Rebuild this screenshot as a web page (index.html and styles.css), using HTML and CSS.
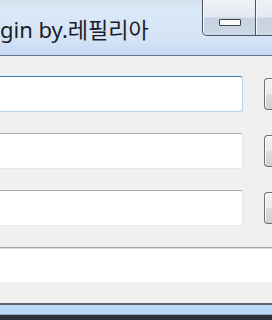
FILE: index.html
```html
<!DOCTYPE html>
<html>
<head>
  <meta charset="utf-8">
  <link rel="stylesheet" href="styles.css">
</head>
<body>
  <div class="window">
    <div class="titlebar">
      <div class="title">gin by.레필리아</div>
      <div class="caption-buttons">
        <div class="cap-btn min-btn"><span class="min-icon"></span></div>
        <div class="cap-btn max-btn"></div>
      </div>
    </div>

    <div class="client">
      <div class="form-row">
        <input type="text" class="textbox focused">
        <button class="side-btn"></button>
      </div>
      <div class="form-row">
        <input type="text" class="textbox">
        <button class="side-btn"></button>
      </div>
      <div class="form-row">
        <input type="text" class="textbox">
        <button class="side-btn"></button>
      </div>
    </div>

    <div class="log-area"></div>
    <div class="status-bar"></div>
  </div>

  <div class="next-window"></div>
</body>
</html>
```

FILE: styles.css
```css
html, body {
  margin: 0;
  padding: 0;
}

body {
  width: 272px;
  height: 320px;
  overflow: hidden;
  background-color: #2b323a;
  font-family: "Noto Sans", "Noto Sans CJK KR", sans-serif;
}

.window {
  display: flex;
  flex-direction: column;
}

/* title bar */
.titlebar {
  display: flex;
  height: 55px;
  border-bottom: 1px solid #67778a;
  background: linear-gradient(#d5e0ec, #dae8f8 20%, #d4e4f6 70%, #c5daf2);
}

.title {
  width: 202px;
  flex: none;
  padding-top: 15px;
  font-size: 22px;
  line-height: 28px;
  color: #1c1c2a;
  white-space: nowrap;
}

.caption-buttons {
  display: flex;
  flex: none;
  align-self: flex-start;
}

.cap-btn {
  box-sizing: border-box;
  height: 36px;
  border: 1px solid #4a5664;
  border-top: none;
  background: linear-gradient(#eef2f7, #e3eaf2 48%, #c6d2df 52%, #cbd7e4);
  box-shadow: inset 1px 0 0 #f6f9fc;
}

.min-btn {
  width: 54px;
  border-bottom-left-radius: 5px;
  display: flex;
  justify-content: center;
  align-items: flex-end;
}

.min-icon {
  width: 20px;
  height: 5px;
  margin-bottom: 9px;
  margin-left: 2px;
  border: 1px solid #3b4552;
  border-radius: 1px;
  background-color: #fbfbfb;
}

.max-btn {
  width: 16px;
  border-left: none;
  border-right: none;
}

/* client area with three rows */
.client {
  height: 171px;
  padding-top: 20px;
  background-color: #f0f0f0;
  display: flex;
  flex-direction: column;
  gap: 21px;
}

.form-row {
  display: flex;
  align-items: center;
  height: 36px;
}

.textbox {
  flex: none;
  box-sizing: border-box;
  width: 243px;
  height: 36px;
  margin: 0;
  padding: 0 4px;
  border: 1px solid #e2e7ec;
  border-top-color: #abadb3;
  border-left: none;
  border-radius: 0 3px 3px 0;
  background-color: #ffffff;
  font-family: "Noto Sans", sans-serif;
  font-size: 15px;
  outline: none;
}

.textbox.focused {
  border-color: #b7d3ea;
  border-top-color: #3d7bad;
}

.side-btn {
  flex: none;
  width: 8px;
  height: 32px;
  margin: 0 0 0 21px;
  padding: 0;
  border: 1px solid #707070;
  border-right: none;
  border-radius: 4px 0 0 4px;
  background: linear-gradient(#f2f2f2, #ebebeb 50%, #dddddd 51%, #cfcfcf);
  box-shadow: inset 1px 1px 0 #fcfcfc;
}

/* bottom parts */
.log-area {
  height: 34px;
  border-top: 1px solid #a4a4a4;
  box-shadow: inset 0 1px 0 #dadada;
  background-color: #ffffff;
}

.status-bar {
  height: 21px;
  background-color: #f0f0f0;
}

.next-window {
  height: 9px;
  border-top: 2px solid #5b6571;
  border-bottom: 1px solid #8ea5bb;
  background-color: #bbdaf7;
}
```
